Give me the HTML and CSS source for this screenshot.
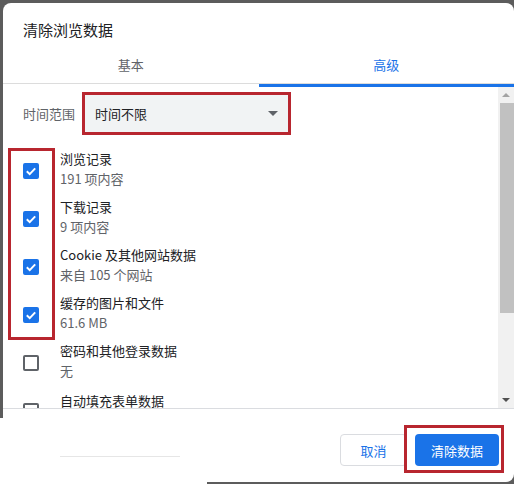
FILE: index.html
```html
<!DOCTYPE html>
<html lang="zh-CN">
<head>
<meta charset="utf-8">
<title>清除浏览数据</title>
<link rel="stylesheet" href="styles.css">
</head>
<body>
<div class="dialog">
  <div class="title">清除浏览数据</div>
  <div class="tabs">
    <div class="tab">基本</div>
    <div class="tab active">高级</div>
  </div>
  <div class="content">
    <div class="main">
      <div class="range-row">
        <span class="range-label">时间范围</span>
        <div class="mark-box">
          <div class="select">
            <span class="select-text">时间不限</span>
            <span class="select-arrow"></span>
          </div>
        </div>
      </div>
      <div class="group">
        <div class="row">
          <span class="cb checked"><svg viewBox="0 0 16 16" width="16" height="16"><path d="M3.8 8.3 L6.7 11.1 L12.2 5.4" fill="none" stroke="#fff" stroke-width="2"/></svg></span>
          <div class="texts"><div class="primary">浏览记录</div><div class="secondary">191 项内容</div></div>
        </div>
        <div class="row">
          <span class="cb checked"><svg viewBox="0 0 16 16" width="16" height="16"><path d="M3.8 8.3 L6.7 11.1 L12.2 5.4" fill="none" stroke="#fff" stroke-width="2"/></svg></span>
          <div class="texts"><div class="primary">下载记录</div><div class="secondary">9 项内容</div></div>
        </div>
        <div class="row">
          <span class="cb checked"><svg viewBox="0 0 16 16" width="16" height="16"><path d="M3.8 8.3 L6.7 11.1 L12.2 5.4" fill="none" stroke="#fff" stroke-width="2"/></svg></span>
          <div class="texts"><div class="primary">Cookie 及其他网站数据</div><div class="secondary">来自 105 个网站</div></div>
        </div>
        <div class="row">
          <span class="cb checked"><svg viewBox="0 0 16 16" width="16" height="16"><path d="M3.8 8.3 L6.7 11.1 L12.2 5.4" fill="none" stroke="#fff" stroke-width="2"/></svg></span>
          <div class="texts"><div class="primary">缓存的图片和文件</div><div class="secondary">61.6 MB</div></div>
        </div>
        <div class="group-mark"></div>
      </div>
      <div class="row">
        <span class="cb"></span>
        <div class="texts"><div class="primary">密码和其他登录数据</div><div class="secondary">无</div></div>
      </div>
      <div class="row">
        <span class="cb"></span>
        <div class="texts"><div class="primary">自动填充表单数据</div></div>
      </div>
    </div>
    <div class="scrollbar">
      <div class="sb-btn"><span class="arrow-up"></span></div>
      <div class="sb-thumb"></div>
      <div class="sb-track"></div>
      <div class="sb-btn"><span class="arrow-down"></span></div>
    </div>
  </div>
  <div class="footer">
    <div class="ghost-line"></div>
    <div class="spacer"></div>
    <button class="btn cancel">取消</button>
    <div class="confirm-wrap">
      <button class="btn confirm">清除数据</button>
    </div>
  </div>
</div>
</body>
</html>
```

FILE: styles.css
```css
html, body {
  margin: 0;
  padding: 0;
}
body {
  width: 514px;
  height: 484px;
  overflow: hidden;
  background: linear-gradient(#ffffff, #ffffff) 0 418px / 207px 66px no-repeat, #5c5c5c;
  font-family: "Noto Sans CJK SC", "Noto Sans", sans-serif;
  color: #202124;
}
.dialog {
  margin: 3px 0 0 3px;
  width: 511px;
  height: 479px;
  background: #ffffff;
  border-radius: 8px;
  display: flex;
  flex-direction: column;
  overflow: hidden;
}
.title {
  font-size: 15px;
  line-height: 20px;
  padding: 17px 20px 6px 20px;
  color: #202124;
}
.tabs {
  display: flex;
}
.tab {
  flex: 1;
  text-align: center;
  font-size: 13px;
  line-height: 38px;
  height: 38px;
  color: #5f6368;
  border-bottom: 3px solid transparent;
  box-shadow: inset 0 -1px 0 #dcdcdc;
}
.tab.active {
  color: #1a73e8;
  border-bottom-color: #1a73e8;
}
.content {
  height: 321px;
  display: flex;
  border-bottom: 1px solid #dadce0;
}
.main {
  flex: 1;
  overflow: hidden;
  padding-left: 20px;
}
.range-row {
  display: flex;
  align-items: center;
  margin-top: 5px;
  height: 43px;
}
.range-label {
  font-size: 13px;
  color: #5f6368;
  width: 59px;
}
.mark-box {
  border: 3px solid #b8262f;
}
.select {
  width: 203px;
  height: 37px;
  background: #f1f3f4;
  display: flex;
  align-items: center;
  justify-content: space-between;
  padding: 0 10px;
  box-sizing: border-box;
}
.select-text {
  font-size: 13px;
  color: #202124;
}
.select-arrow {
  width: 0;
  height: 0;
  border-left: 5px solid transparent;
  border-right: 5px solid transparent;
  border-top: 5px solid #5f6368;
}
.group {
  position: relative;
  margin-top: 12px;
}
.group-mark {
  position: absolute;
  left: -15px;
  top: 1px;
  width: 47px;
  height: 192px;
  border: 3px solid #b8262f;
  box-sizing: border-box;
}
.row {
  display: flex;
  align-items: center;
  height: 48px;
}
.cb {
  width: 16px;
  height: 16px;
  border-radius: 2px;
  border: 2px solid #5f6368;
  box-sizing: border-box;
  flex: none;
  display: flex;
  align-items: center;
  justify-content: center;
}
.cb.checked {
  background: #1a73e8;
  border-color: #1a73e8;
}
.cb svg {
  flex: none;
}
.texts {
  margin-left: 21px;
  margin-bottom: 4px;
}
.row:last-child .texts {
  align-self: flex-start;
  margin-top: 4px;
}
.primary {
  font-size: 13px;
  line-height: 20px;
  color: #202124;
}
.secondary {
  font-size: 13px;
  line-height: 20px;
  color: #5f6368;
}
.scrollbar {
  width: 16px;
  background: #f1f1f1;
  display: flex;
  flex-direction: column;
}
.sb-btn {
  height: 16px;
  display: flex;
  align-items: center;
  justify-content: center;
}
.arrow-up {
  width: 0;
  height: 0;
  border-left: 4px solid transparent;
  border-right: 4px solid transparent;
  border-bottom: 4px solid #a3a3a3;
}
.arrow-down {
  width: 0;
  height: 0;
  border-left: 4px solid transparent;
  border-right: 4px solid transparent;
  border-top: 4px solid #505050;
}
.sb-thumb {
  height: 210px;
  margin: 0 0 0 2px;
  background: #c1c1c1;
}
.sb-track {
  flex: 1;
}
.footer {
  flex: 1;
  display: flex;
  align-items: flex-start;
  padding: 25px 15px 0 57px;
}
.ghost-line {
  width: 120px;
  height: 1px;
  background: #e6e6e6;
  margin-top: 22px;
}
.spacer {
  flex: 1;
}
.btn {
  height: 32px;
  font-family: "Noto Sans CJK SC", "Noto Sans", sans-serif;
  font-size: 13px;
  border-radius: 4px;
  padding: 0;
  cursor: pointer;
}
.cancel {
  width: 67px;
  background: #ffffff;
  color: #1a73e8;
  border: 1px solid #dadce0;
  margin-right: 8px;
}
.confirm-wrap {
  position: relative;
}
.confirm-wrap::after {
  content: "";
  position: absolute;
  top: -9px;
  left: -11px;
  right: -5px;
  bottom: -7px;
  border: 3px solid #b8262f;
}
.confirm {
  display: block;
  width: 84px;
  background: #1a73e8;
  color: #ffffff;
  border: none;
}
```
